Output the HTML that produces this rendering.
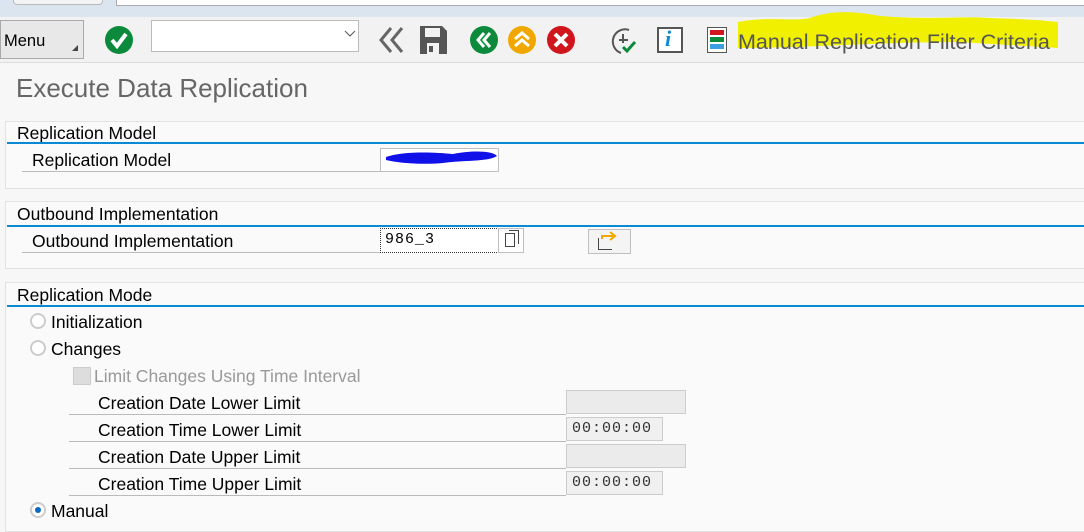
<!DOCTYPE html>
<html><head><meta charset="utf-8"><style>
*{margin:0;padding:0;box-sizing:border-box}
body{width:1084px;height:523px;overflow:hidden;background:#f7f7f7;font-family:"Liberation Sans",sans-serif;position:relative;color:#000}
.a{position:absolute}
.t{position:absolute;font-size:17.5px;white-space:nowrap;line-height:20px;margin-top:1px}
.box{position:absolute;left:5px;right:0;background:#fafafa;border:1px solid #e2e2e2;border-right:none}
.bl{position:absolute;left:7px;right:0;height:2px;background:#0a8ad2}
.ul{position:absolute;height:1px;background:#bbb}
.inp{position:absolute;background:#fff;border:1px solid #bfbfbf}
.mono{font-family:"Liberation Mono",monospace;font-size:15px;letter-spacing:1px}
.rad{position:absolute;width:16px;height:16px;border-radius:50%;border:2px solid #ccc;background:#fff}
</style></head><body>
<div class="a" style="left:0;top:0;width:1084px;height:17px;background:#dbe5f0"></div>
<div class="a" style="left:13px;top:0;width:90px;height:5px;background:#f3f3f3;border:1px solid #bbb;border-top:none;border-radius:0 0 4px 4px"></div>
<div class="a" style="left:116px;top:0;width:968px;height:6px;background:#fff;border-left:1px solid #aaa;border-bottom:1px solid #aaa"></div>
<div class="a" style="left:0;top:17px;width:1084px;height:46px;background:#f2f2f2;border-bottom:1px solid #ddd"></div>
<div class="a" style="left:0;top:20px;width:84px;height:39px;background:#e8e8e8;border:1px solid #aaa"></div>
<div class="t" style="left:4px;top:30px;font-size:16.5px">Menu</div>
<div class="a" style="left:72px;top:45px;width:0;height:0;border-left:6px solid transparent;border-bottom:6px solid #444"></div>
<svg class="a" style="left:104px;top:25px" width="30" height="30"><circle cx="15" cy="15" r="14" fill="#0a8a3a"/><path d="M8 15l5 6 9-12" stroke="#fff" stroke-width="4" fill="none"/></svg>
<div class="a" style="left:151px;top:20px;width:208px;height:32px;background:#fff;border:1px solid #bbb"></div>
<svg class="a" style="left:344px;top:30px" width="12" height="8"><path d="M1 1l5 5 5-5" stroke="#555" fill="none"/></svg>
<svg class="a" style="left:377px;top:25px" width="30" height="30"><path d="M14 3L4 15l10 12M25 3L15 15l10 12" stroke="#666" stroke-width="3" fill="none"/></svg>
<svg class="a" style="left:417px;top:24px" width="32" height="32"><path d="M3 2h22l5 5v23H3z" fill="#555"/><rect x="8" y="4" width="15" height="9" fill="#f2f2f2"/><rect x="10" y="19" width="12" height="11" fill="#f2f2f2"/><rect x="12" y="22" width="4" height="6" fill="#555"/></svg>
<svg class="a" style="left:469px;top:25px" width="30" height="30"><circle cx="15" cy="15" r="14" fill="#0a8a3a"/><path d="M15 8l-6 7 6 7M21 8l-6 7 6 7" stroke="#fff" stroke-width="3" fill="none"/></svg>
<svg class="a" style="left:507px;top:25px" width="30" height="30"><circle cx="15" cy="15" r="14" fill="#f0a800"/><path d="M8 14l7-6 7 6M8 21l7-6 7 6" stroke="#fff" stroke-width="3" fill="none"/></svg>
<svg class="a" style="left:546px;top:25px" width="30" height="30"><circle cx="15" cy="15" r="14" fill="#d0161c"/><path d="M9 9l12 12M21 9L9 21" stroke="#fff" stroke-width="4"/></svg>
<svg class="a" style="left:609px;top:26px" width="30" height="30"><path d="M20 4A12 12 0 1 0 12 27" stroke="#555" stroke-width="2" fill="none"/><path d="M14 8v9M10 14h9" stroke="#555" stroke-width="2"/><path d="M14 21l4 4 8-9" stroke="#0a8a3a" stroke-width="3" fill="none"/></svg>
<div class="a" style="left:657px;top:27px;width:26px;height:26px;border:2px solid #555;background:#fff"></div>
<div class="t" style="left:665px;top:28px;color:#0a8ad2;font-style:italic;font-weight:bold;font-family:'Liberation Serif',serif;font-size:22px">i</div>
<div class="a" style="left:707px;top:27px;width:20px;height:26px;border:1px solid #555;background:#fff"></div>
<div class="a" style="left:710px;top:30px;width:14px;height:5px;background:#d0161c"></div>
<div class="a" style="left:710px;top:37px;width:14px;height:5px;background:#0a8a3a"></div>
<div class="a" style="left:710px;top:44px;width:14px;height:5px;background:#3aa0e0"></div>
<svg class="a" style="left:730px;top:6px" width="330" height="52"><path d="M8 16C40 10 60 16 80 12C100 4 125 5 150 10C200 14 230 10 260 12C290 13 310 14 328 16L328 42C300 40 260 38 230 36C150 36 80 42 8 42Z" fill="#f0f000"/></svg>
<div class="t" style="left:738px;top:29px;font-size:21.5px;color:#555;line-height:24px">Manual Replication Filter Criteria</div>
<div class="t" style="left:16px;top:72px;font-size:26px;line-height:30px;color:#666">Execute Data Replication</div>

<div class="box" style="top:121px;height:68px"></div>
<div class="t" style="left:17px;top:122px">Replication Model</div>
<div class="bl" style="top:142px"></div>
<div class="t" style="left:32px;top:149px">Replication Model</div>
<div class="ul" style="left:22px;top:171px;width:358px"></div>
<div class="inp" style="left:380px;top:148px;width:119px;height:24px"></div>
<svg class="a" style="left:383px;top:148px" width="118" height="20"><path d="M3 9C20 3 50 4 70 6C90 2 110 3 114 8C105 14 80 12 60 15C40 17 15 15 3 12Z" fill="#1010e8"/></svg>

<div class="box" style="top:201px;height:68px"></div>
<div class="t" style="left:17px;top:203px">Outbound Implementation</div>
<div class="bl" style="top:225px"></div>
<div class="t" style="left:32px;top:230px">Outbound Implementation</div>
<div class="ul" style="left:22px;top:252px;width:358px"></div>
<div class="inp mono" style="left:380px;top:228px;width:119px;height:25px;border:1px dotted #333;padding:2px 4px">986_3</div>
<div class="inp" style="left:498px;top:228px;width:26px;height:25px"></div>
<div class="a" style="left:505px;top:233px;width:10px;height:14px;border:1px solid #444"></div>
<div class="a" style="left:509px;top:230px;width:10px;height:14px;border-top:1px solid #444;border-right:1px solid #444"></div>
<div class="inp" style="left:588px;top:229px;width:43px;height:25px;background:#f4f4f4"></div>
<div class="a" style="left:598px;top:238px;width:14px;height:12px;border:1px solid #444;border-top:none;border-right:none"></div>
<svg class="a" style="left:601px;top:231px" width="20" height="12"><path d="M1 8V5h11M9 1l5 4-5 4" stroke="#f0a800" stroke-width="2" fill="none"/></svg>

<div class="box" style="top:282px;height:250px"></div>
<div class="t" style="left:17px;top:284px">Replication Mode</div>
<div class="bl" style="top:305px"></div>
<div class="rad" style="left:30px;top:313px"></div>
<div class="t" style="left:51px;top:311px">Initialization</div>
<div class="rad" style="left:30px;top:340px"></div>
<div class="t" style="left:51px;top:338px">Changes</div>
<div class="a" style="left:73px;top:367px;width:18px;height:18px;background:#ddd;border:1px solid #ccc"></div>
<div class="t" style="left:94px;top:365px;color:#999">Limit Changes Using Time Interval</div>
<div class="t" style="left:98px;top:392px">Creation Date Lower Limit</div>
<div class="ul" style="left:69px;top:414px;width:497px"></div>
<div class="inp" style="left:566px;top:390px;width:120px;height:24px;background:#ebebeb;border-color:#ccc"></div>
<div class="t" style="left:98px;top:419px">Creation Time Lower Limit</div>
<div class="ul" style="left:69px;top:441px;width:497px"></div>
<div class="inp mono" style="left:566px;top:417px;width:97px;height:24px;background:#f0f0f0;border-color:#ccc;padding:2px 5px;color:#333">00:00:00</div>
<div class="t" style="left:98px;top:446px">Creation Date Upper Limit</div>
<div class="ul" style="left:69px;top:468px;width:497px"></div>
<div class="inp" style="left:566px;top:444px;width:120px;height:24px;background:#ebebeb;border-color:#ccc"></div>
<div class="t" style="left:98px;top:473px">Creation Time Upper Limit</div>
<div class="ul" style="left:69px;top:495px;width:497px"></div>
<div class="inp mono" style="left:566px;top:471px;width:97px;height:24px;background:#f0f0f0;border-color:#ccc;padding:2px 5px;color:#333">00:00:00</div>
<div class="rad" style="left:30px;top:502px"></div>
<div class="a" style="left:35px;top:507px;width:6px;height:6px;border-radius:50%;background:#0a6ac2"></div>
<div class="t" style="left:51px;top:500px">Manual</div>
</body></html>
